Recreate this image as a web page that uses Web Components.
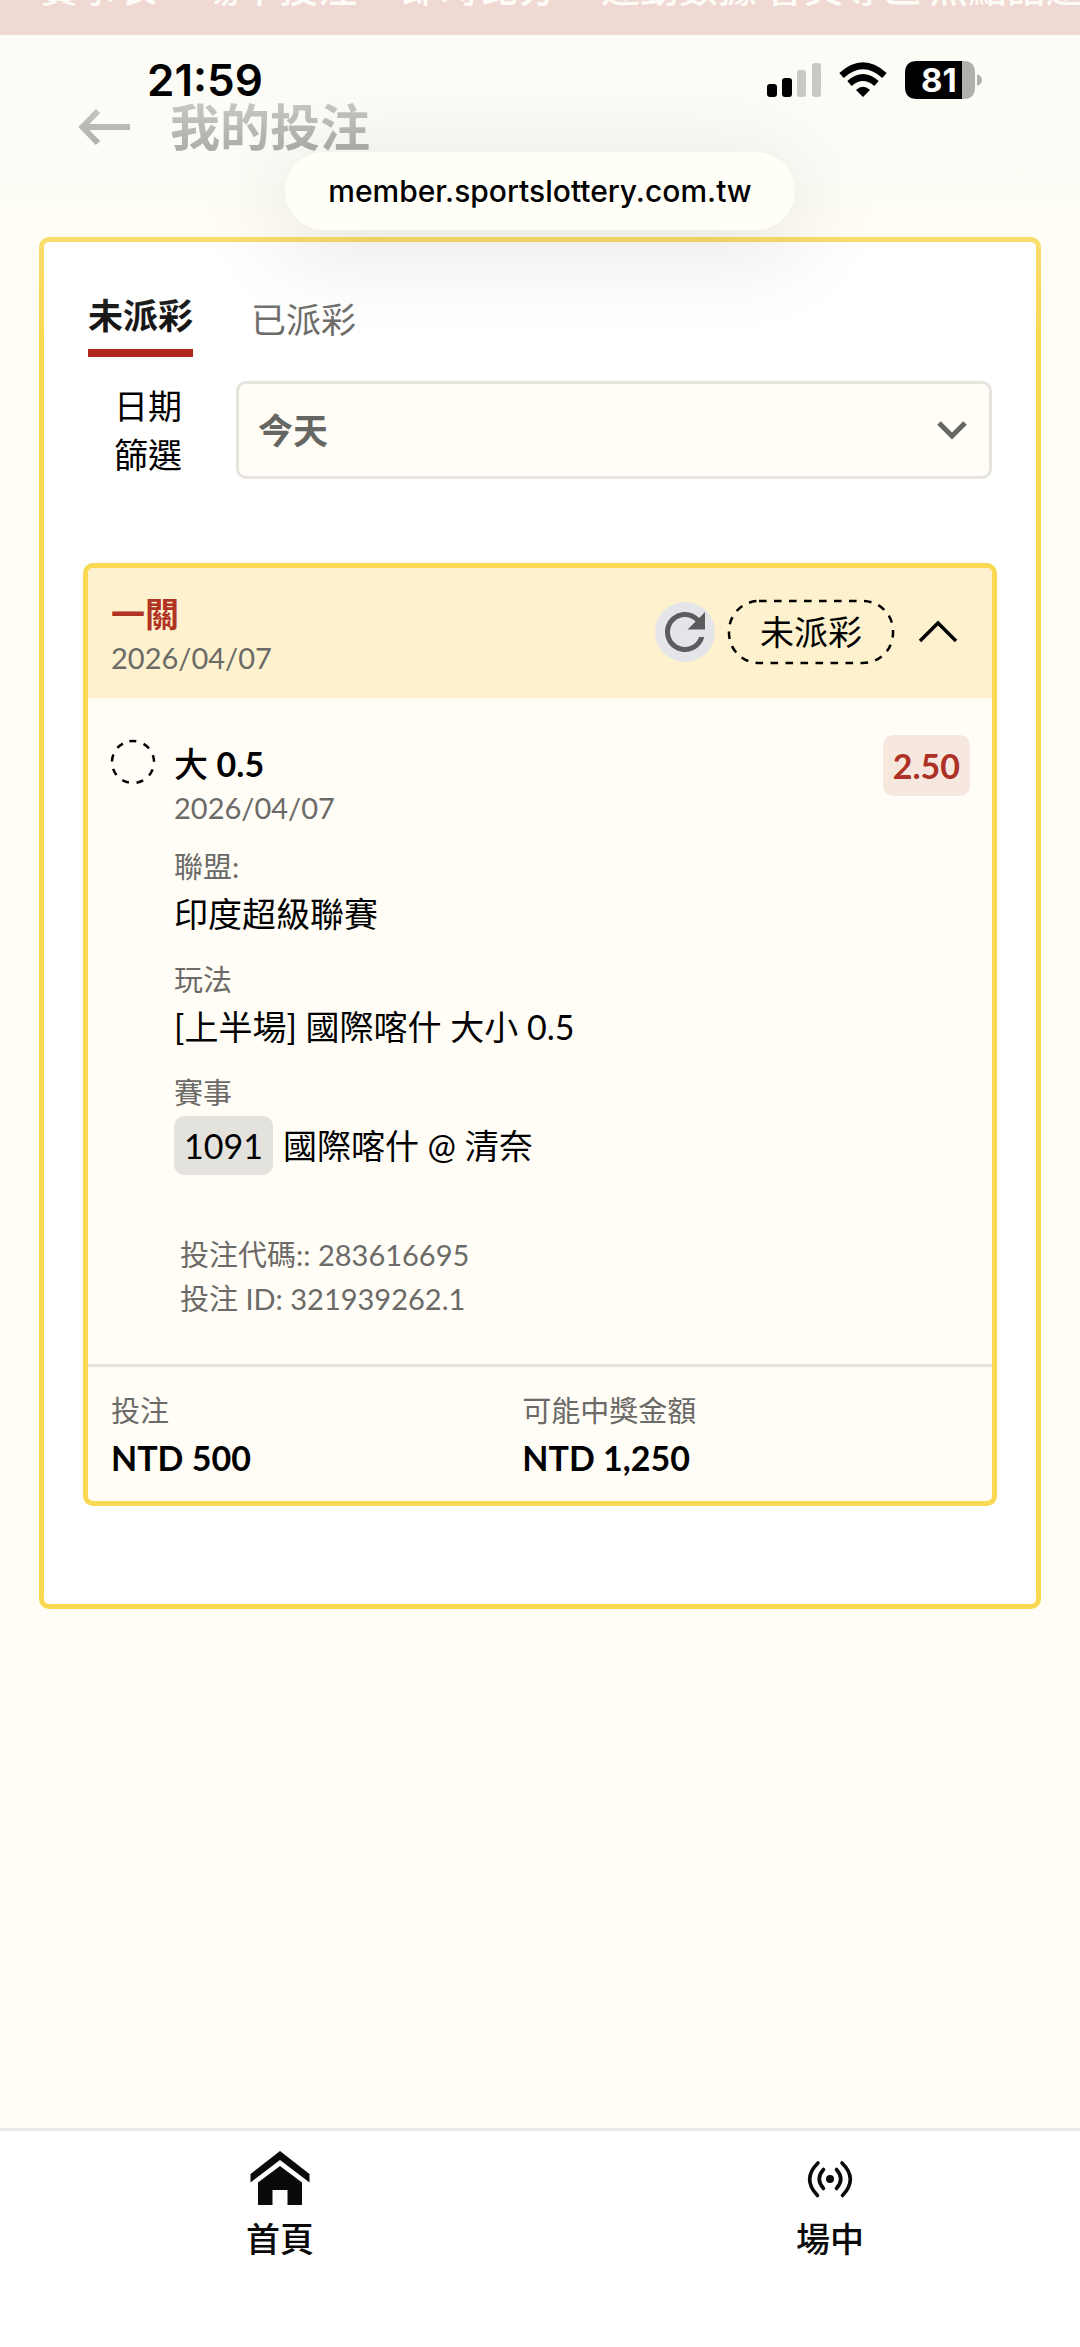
<!DOCTYPE html>
<html lang="zh-Hant-TW">
<head>
<meta charset="utf-8">
<meta name="viewport" content="width=device-width, initial-scale=1">
<title>我的投注</title>
<style>
  html, body { margin: 0; }
  body {
    --red: #b0261e;
    --gold: #f9d854;
    --cream: #fffdf6;
    --grey: #6b6a67;
    --line: #e6e4de;
    --text: 34px;
    --small: 29px;
    font-family: Lato, "Noto Sans CJK TC", sans-serif;
    font-size: var(--text);
    line-height: 48px;
    color: #000;
    background: var(--cream);
  }
</style>
</head>
<body>
<bet-app></bet-app>

<script>
const define = (name, html) => {
  const tpl = document.createElement('template');
  tpl.innerHTML = '<style>*{box-sizing:border-box}:host{display:block;box-sizing:border-box}</style>' + html;
  customElements.define(name, class extends HTMLElement {
    constructor() {
      super();
      this.attachShadow({ mode: 'open' }).append(tpl.content.cloneNode(true));
    }
  });
};

/* red site menu, mostly scrolled off the top */
define('site-menu', `
<style>
  :host { background: var(--red); height: 35px; overflow: hidden; }
  nav { display: flex; height: 100%; align-items: flex-end; padding: 0 0 28px 40px; gap: 8px; white-space: nowrap; }
  a { color: #fff; text-decoration: none; font-size: 39px; line-height: 39px; font-weight: 500; }
  a.wide { padding-right: 36px; }
</style>
<nav>
  <a class="wide" href="#">賽事表</a><a class="wide" href="#">場中投注</a><a class="wide" href="#">即時比分</a><a href="#">運動數據</a><a href="#">會員專區</a><a href="#">焦點話題</a>
</nav>`);

define('page-header', `
<style>
  :host { display: flex; align-items: center; gap: 39px; padding: 64px 78px 82px; }
  button { border: 0; background: none; padding: 0; display: flex; }
  h1 { margin: 0; font-size: 50px; line-height: 56px; font-weight: 700; }
  svg { display: block; }
</style>
<button aria-label="返回"><svg width="53" height="40" viewBox="0 0 53 40" fill="none" stroke="#000" stroke-width="6"><path d="M52 20H5M20 4L4.500 20L20 36"/></svg></button>
<h1><slot></slot></h1>`);

define('bet-tabs', `
<style>
  :host { display: flex; align-items: flex-start; gap: 58px; }
  button { font: inherit; font-size: 35px; border: 0; background: none; padding: 0; line-height: 48px; color: var(--grey); }
  button.idle { padding-top: 4px; }
  button.on { color: #111; font-weight: 700; padding-bottom: 10px; border-bottom: 8px solid var(--red); }
</style>
<button class="on" role="tab" aria-selected="true">未派彩</button>
<button class="idle" role="tab" aria-selected="false">已派彩</button>`);

define('date-filter', `
<style>
  :host { display: flex; align-items: center; gap: 54px; }
  label { line-height: 49px; width: 94px; text-align: right; padding-left: 24px; }
  .box { flex: 1; display: grid; align-items: center; }
  select {
    grid-area: 1 / 1; appearance: none; width: 100%; height: 98px; font: inherit; font-size: 35px; font-weight: 700;
    color: #666662; background: var(--cream); border: 3px solid var(--line); border-radius: 10px; padding: 0 19px;
  }
  svg { grid-area: 1 / 1; justify-self: end; margin-right: 24px; pointer-events: none; }
</style>
<label for="day">日期篩選</label>
<div class="box">
  <select id="day"><option>今天</option></select>
  <svg width="32" height="20" viewBox="0 0 32 20" fill="none" stroke="#666662" stroke-width="5"><path d="M3 3L16 16L29 3"/></svg>
</div>`);

define('status-badge', `
<style>
  :host { display: grid; width: 168px; height: 66px; place-items: center; }
  svg, span { grid-area: 1 / 1; }
  rect { fill: none; stroke: #000; stroke-width: 2.500; stroke-dasharray: 7.600 7.400; }
</style>
<svg width="168" height="66"><rect x="2" y="2" width="164" height="62" rx="30"/></svg>
<span><slot></slot></span>`);

define('detail-item', `
<style>
  :host { display: grid; gap: 3px; }
  .k { color: var(--grey); font-size: var(--small); line-height: 40px; }
  .v { line-height: 48px; }
</style>
<div class="k"><slot name="label"></slot></div>
<div class="v"><slot></slot></div>`);

define('bet-slip', `
<style>
  :host { border: 5px solid var(--gold); border-radius: 10px; background: var(--cream); overflow: hidden; }
  header { display: flex; align-items: center; justify-content: space-between; background: #fdf2cd; padding: 19px 33px 21px 23px; height: 130px; }
  h2 { margin: 0; padding-top: 4px; font-size: var(--text); line-height: 48px; font-weight: 700; color: #b03324; }
  .date { color: var(--grey); font-size: var(--small); line-height: 40px; }
  .tools { display: flex; align-items: center; gap: 12px; }
  button { border: 0; padding: 0; background: none; display: grid; place-items: center; }
  .refresh { width: 60px; height: 60px; border-radius: 50%; background: #e4e5e9; }
  .fold { margin-left: 10px; }
  .pick { display: grid; grid-template-columns: 46px 1fr auto; column-gap: 18px; padding: 37px 22px 0 22px; }
  .pick > svg { margin-top: 4px; }
  .name { font-weight: 500; padding-top: 5px; line-height: 48px; }
  .odds { align-self: start; background: #f6e8df; color: #ad3126; font-weight: 700; line-height: 61px; border-radius: 10px; padding: 0 10px; }
  .info { grid-column: 2 / 4; display: grid; gap: 22px; padding-top: 19px; }
  .ids { padding: 36px 6px 0; color: var(--grey); font-size: var(--small); line-height: 44px; }
  .chip { display: inline-block; background: #e4e2dc; border-radius: 10px; padding: 0 10px; margin-right: 10px; line-height: 59px; }
  footer { display: grid; grid-template-columns: 48fr 52fr; border-top: 3px solid var(--line); padding: 24px 24px 19px 23px; margin-top: 43px; }
</style>
<header>
  <div><h2>一關</h2><div class="date">2026/04/07</div></div>
  <div class="tools">
    <button class="refresh" aria-label="重新整理"><svg width="60" height="60" viewBox="0 0 24 24" fill="#5c5c5e"><path d="M17.65 6.35C16.2 4.9 14.21 4 12 4c-4.42 0-7.99 3.58-7.99 8s3.57 8 7.99 8c3.73 0 6.84-2.55 7.73-6h-2.08c-.82 2.33-3.04 4-5.65 4-3.31 0-6-2.69-6-6s2.69-6 6-6c1.66 0 3.14.69 4.22 1.78L13 11h7V4l-2.35 2.35z"/></svg></button>
    <status-badge>未派彩</status-badge>
    <button class="fold" aria-label="收合"><svg width="42" height="26" viewBox="0 0 42 26" fill="none" stroke="#000" stroke-width="3.500"><path d="M3 22L21 4L39 22"/></svg></button>
  </div>
</header>
<div class="pick">
  <svg width="46" height="46" viewBox="0 0 46 46"><circle cx="23" cy="23" r="21" fill="none" stroke="#000" stroke-width="2.500" stroke-dasharray="7 7.660" transform="rotate(-100 23 23)"/></svg>
  <div><div class="name">大 <b>0.5</b></div><div class="date">2026/04/07</div></div>
  <div class="odds">2.50</div>
  <div class="info">
    <detail-item><span slot="label">聯盟:</span>印度超級聯賽</detail-item>
    <detail-item><span slot="label">玩法</span>[上半場] 國際喀什 大小 0.5</detail-item>
    <detail-item><span slot="label">賽事</span><span class="chip">1091</span>國際喀什 @ 清奈</detail-item>
    <div class="ids"><div>投注代碼:: 283616695</div><div>投注 ID: 321939262.1</div></div>
  </div>
</div>
<footer>
  <detail-item><span slot="label">投注</span><b>NTD 500</b></detail-item>
  <detail-item><span slot="label">可能中獎金額</span><b>NTD 1,250</b></detail-item>
</footer>`);

define('bet-panel', `
<style>
  :host { background: #fff; border: 5px solid var(--gold); border-radius: 10px; margin: 0 39px; padding: 49px 39px 98px; }
  bet-tabs { margin: 0 5px; }
  date-filter { margin: 24px 5px 84px; }
</style>
<bet-tabs></bet-tabs>
<date-filter></date-filter>
<bet-slip></bet-slip>`);

define('bottom-bar', `
<style>
  :host { background: #fff; border-top: 3px solid #e8e8e6; height: 219px; }
  nav { display: grid; grid-template-columns: 1fr 1fr; padding-top: 17px; }
  a { display: flex; flex-direction: column; align-items: center; gap: 3px; color: #0a0a0a; text-decoration: none; font-weight: 500; padding-left: 20px; }
  a + a { padding-left: 40px; }
  svg { display: block; height: 64px; }
</style>
<nav>
  <a href="#"><svg width="64" viewBox="0 0 64 64" fill="#0a0a0a"><path d="M32 3L61.500 26V34.500L32 12L2.500 34.500V26z"/><path d="M32 18L54 34.500V57H39.500V42H24.500V57H10V34.500z"/></svg><span>首頁</span></a>
  <a href="#"><svg width="64" viewBox="0 0 64 64" fill="none" stroke="#0a0a0a" stroke-width="3.600" stroke-linecap="round"><circle cx="32" cy="31" r="4" fill="#0a0a0a" stroke="none"/><path d="M25.500 21.500Q17 31 25.500 40.500M38.500 21.500Q47 31 38.500 40.500M20 15Q3.500 31 19.500 47.500M44 15Q60.500 31 44.500 47.500"/></svg><span>場中</span></a>
</nav>`);

/* translucent system status bar and collapsed address pill, floating over the page */
define('status-overlay', `
<style>
  :host {
    position: absolute; inset: 0 0 auto 0; height: 340px; pointer-events: none; overflow: hidden;
    font-family: Inter, sans-serif; padding-top: 54px;
    background: linear-gradient(rgba(252,251,245,.84) 60px, rgba(252,251,245,.79) 105px, rgba(252,251,245,.69) 150px, rgba(253,252,248,.15) 237px, rgba(255,255,255,0) 340px);
  }
  .bar { display: flex; justify-content: space-between; align-items: center; height: 52px; padding: 0 97px 0 147px; }
  .time { font-size: 44px; font-weight: 600; line-height: 52px; }
  .icons { display: flex; align-items: center; gap: 18px; }
  .battery { display: grid; align-items: center; }
  .battery > * { grid-area: 1 / 1; }
  .battery span { color: #fff; font-size: 33px; font-weight: 700; line-height: 38px; padding-left: 16px; }
  .pill {
    width: fit-content; margin: 46px auto 0; padding: 0 43px; background: #fffff8; border-radius: 39px;
    font-size: 30px; font-weight: 500; line-height: 78px; box-shadow: 0 16px 90px 10px rgba(0,0,0,.09);
  }
  svg { display: block; }
</style>
<div class="bar">
  <div class="time">21:59</div>
  <div class="icons">
    <svg width="54" height="36" viewBox="0 0 54 36"><rect y="22" width="10" height="13" rx="3"/><rect x="15" y="16" width="10" height="19" rx="3"/><g fill="#cacac5"><rect x="30" y="8" width="9" height="27" rx="3"/><rect x="45" y="1" width="9" height="34" rx="3"/></g></svg>
    <svg width="48" height="36" viewBox="0 0 48 36"><path d="M24 35L17 28Q24 21.500 31 28z"/><g fill="none" stroke="#000" stroke-width="6.500"><path d="M10.500 21.500Q24 9.500 37.500 21.500"/><path d="M2.500 13.500Q24-6 45.500 13.500"/></g></svg>
    <div class="battery">
      <svg width="78" height="38" viewBox="0 0 78 38"><path fill="#b2b1ab" d="M57 0h2q11 0 11 12v14q0 12-11 12h-2zM72 13q5 2 5 6t-5 6z"/><path d="M12 0H57V38H12Q0 38 0 26V12Q0 0 12 0z"/></svg>
      <span>81</span>
    </div>
  </div>
</div>
<div class="pill">member.sportslottery.com.tw</div>`);

define('bet-app', `
<style>
  :host { display: flex; flex-direction: column; min-height: 100vh; position: relative; }
  bottom-bar { margin-top: auto; }
</style>
<site-menu></site-menu>
<page-header>我的投注</page-header>
<bet-panel></bet-panel>
<bottom-bar></bottom-bar>
<status-overlay></status-overlay>`);
</script>
</body>
</html>
